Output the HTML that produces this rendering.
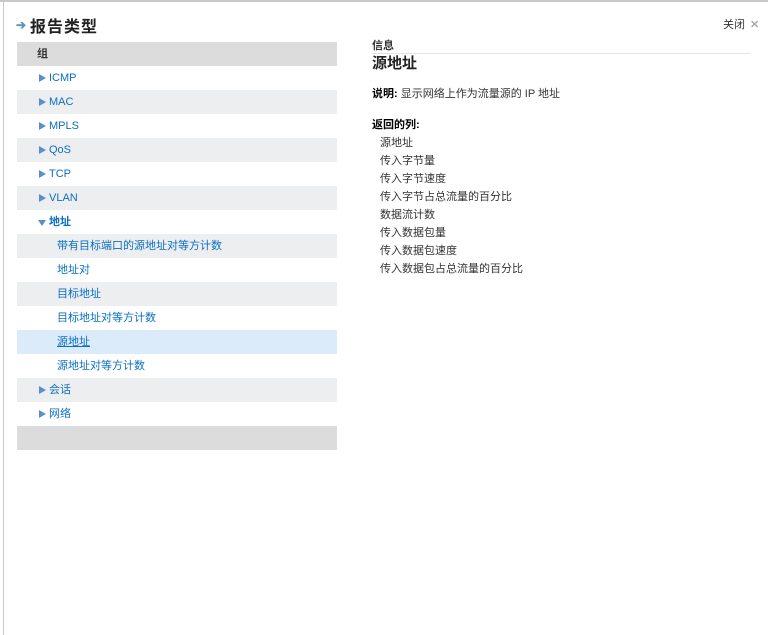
<!DOCTYPE html>
<html><head><meta charset="utf-8"><style>
*{margin:0;padding:0;box-sizing:border-box}
body{width:768px;height:635px;background:#fff;position:relative;overflow:hidden;font-family:"Liberation Sans","Noto Sans CJK SC",sans-serif;font-size:11px;color:#333}
.top{position:absolute;left:0;top:0;width:768px;height:2px;background:#c8c8c8}
.lft{position:absolute;left:3px;top:0;width:1px;height:635px;background:#c8c8c8}
h1{position:absolute;left:30px;top:13px;font-size:16px;font-weight:bold;color:#222;letter-spacing:1px}
.arr{position:absolute;left:16px;top:18px;color:#5b8fc7;font-size:12px;font-weight:bold}
.close{position:absolute;left:723px;top:16px;font-size:11px;color:#333}
.close b{color:#aaa;margin-left:5px}
.panel{position:absolute;left:17px;top:42px;width:320px}
.r{height:24px;line-height:24px;color:#0a6fc2;font-size:11px;position:relative}
.g{background:#edeef0}
.h{background:#dcdcdc;color:#333;font-weight:bold;padding-left:20px}
.hl{background:#dcebfa}
.t{padding-left:32px}
.t:before{content:"";position:absolute;left:22px;top:8px;border-left:7px solid #5b8fc7;border-top:4px solid transparent;border-bottom:4px solid transparent}
.open:before{left:21px;top:10px;border-left:4px solid transparent;border-right:4px solid transparent;border-top:6px solid #5b8fc7;border-bottom:0}
.s{padding-left:40px}
.info{position:absolute;left:372px;top:37px;width:378px}
.lab{font-size:11px;color:#333;border-bottom:1px solid #e4e4e4;padding-bottom:0;font-weight:bold}
.ti{font-size:15px;font-weight:bold;color:#222;margin-top:-2px}
.d{margin-top:12px}
.rc{margin-top:15px;font-weight:bold;color:#000}
.it{padding-left:8px;line-height:18px}
</style></head><body>
<div class="top"></div><div class="lft"></div>
<div class="arr">➔</div><h1>报告类型</h1>
<div class="close">关闭<b>✕</b></div>
<div class="panel">
<div class="r h">组</div>
<div class="r t">ICMP</div>
<div class="r t g">MAC</div>
<div class="r t">MPLS</div>
<div class="r t g">QoS</div>
<div class="r t">TCP</div>
<div class="r t g">VLAN</div>
<div class="r t open" style="font-weight:bold">地址</div>
<div class="r s g">带有目标端口的源地址对等方计数</div>
<div class="r s">地址对</div>
<div class="r s g">目标地址</div>
<div class="r s">目标地址对等方计数</div>
<div class="r s hl"><u>源地址</u></div>
<div class="r s">源地址对等方计数</div>
<div class="r t g">会话</div>
<div class="r t">网络</div>
<div class="r h"></div>
</div>
<div class="info">
<div class="lab">信息</div>
<div class="ti">源地址</div>
<div class="d"><b style="color:#000">说明:</b> 显示网络上作为流量源的 IP 地址</div>
<div class="rc">返回的列:</div>
<div style="margin-top:2px">
<div class="it">源地址</div><div class="it">传入字节量</div><div class="it">传入字节速度</div><div class="it">传入字节占总流量的百分比</div><div class="it">数据流计数</div><div class="it">传入数据包量</div><div class="it">传入数据包速度</div><div class="it">传入数据包占总流量的百分比</div>
</div></div>
</body></html>
